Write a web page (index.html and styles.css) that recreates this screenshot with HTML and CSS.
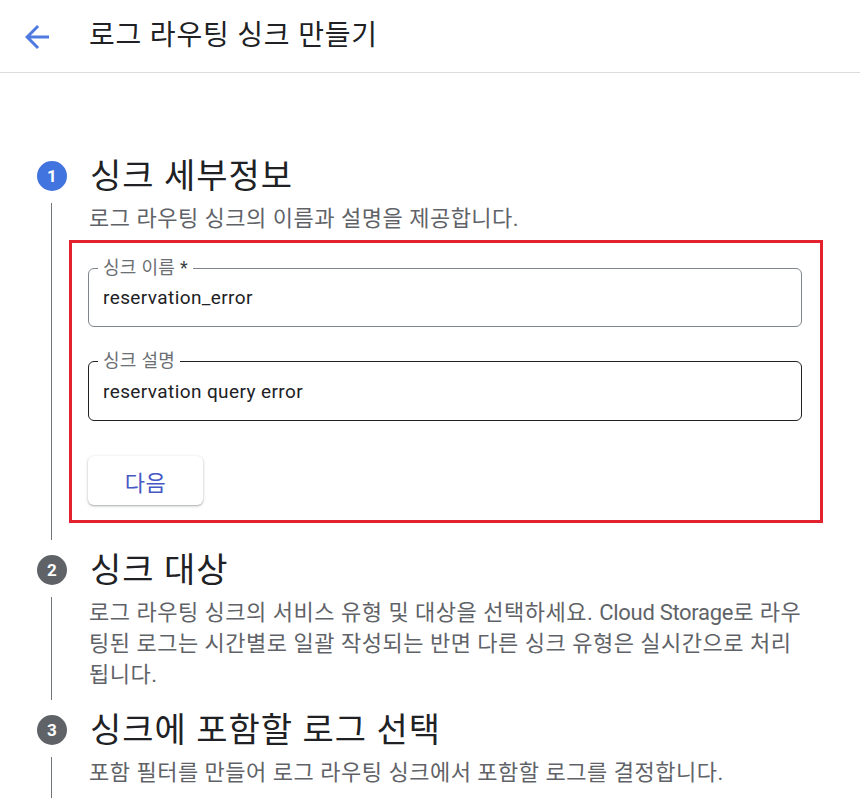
FILE: index.html
```html
<!DOCTYPE html>
<html lang="ko">
<head>
<meta charset="utf-8">
<title>로그 라우팅 싱크 만들기</title>
<link rel="stylesheet" href="styles.css">
</head>
<body>
<header class="topbar">
  <span class="back">
    <svg viewBox="0 0 24 24" width="36" height="36"><path fill="#4f7be0" d="M20 11H7.83l5.59-5.59L12 4l-8 8 8 8 1.41-1.41L7.83 13H20v-2z"/></svg>
  </span>
  <h1 class="title">로그 라우팅 싱크 만들기</h1>
</header>
<main class="steps">
  <section class="step">
    <div class="step-head">
      <span class="num num-active">1</span>
      <h2 class="step-title">싱크 세부정보</h2>
    </div>
    <div class="step-body step-body-open">
      <p class="desc">로그 라우팅 싱크의 이름과 설명을 제공합니다.</p>
      <div class="highlight">
        <div class="field">
          <span class="label">싱크 이름 <span class="req">*</span></span>
          <span class="value">reservation_error</span>
        </div>
        <div class="field field-focus">
          <span class="label">싱크 설명</span>
          <span class="value">reservation query error</span>
        </div>
        <button class="next">다음</button>
      </div>
    </div>
  </section>
  <section class="step">
    <div class="step-head">
      <span class="num">2</span>
      <h2 class="step-title">싱크 대상</h2>
    </div>
    <div class="step-body">
      <p class="desc">로그 라우팅 싱크의 서비스 유형 및 대상을 선택하세요. <span class="product">Cloud Storage</span>로 라우팅된 로그는 시간별로 일괄 작성되는 반면 다른 싱크 유형은 실시간으로 처리됩니다.</p>
    </div>
  </section>
  <section class="step">
    <div class="step-head">
      <span class="num">3</span>
      <h2 class="step-title">싱크에 포함할 로그 선택</h2>
    </div>
    <div class="step-body">
      <p class="desc">포함 필터를 만들어 로그 라우팅 싱크에서 포함할 로그를 결정합니다.</p>
    </div>
  </section>
</main>
</body>
</html>
```
FILE: styles.css
```css
* { box-sizing: border-box; }
html, body { margin: 0; padding: 0; background: #fff; }
body {
  font-family: "Roboto", "Noto Sans CJK KR", sans-serif;
  color: #202124;
  overflow: hidden;
}
.topbar {
  height: 73px;
  border-bottom: 1px solid #dadce0;
  display: flex;
  align-items: center;
  padding-left: 19px;
}
.back { display: flex; width: 36px; height: 36px; margin-top: 2px; }
.title {
  margin: 0 0 0 34px;
  font-size: 28px;
  letter-spacing: 0.8px;
  font-weight: 400;
  color: #202124;
  line-height: 36px;
}
.steps { padding-top: 73px; }
.step-head {
  height: 60px;
  display: flex;
  align-items: center;
  padding-left: 37px;
}
.num {
  width: 30px;
  height: 30px;
  border-radius: 50%;
  background: #5f6368;
  color: #fff;
  font-size: 17px;
  font-weight: 700;
  display: flex;
  align-items: center;
  justify-content: center;
  flex: none;
}
.num-active { background: #4274e0; }
.step-title {
  margin: 0 0 0 23px;
  font-size: 34px;
  letter-spacing: 1px;
  font-weight: 400;
  line-height: 42px;
  color: #202124;
}
.step-body {
  margin-left: 51px;
  border-left: 1px solid #70757a;
  padding: 0 0 10px 37px;
}
.step-body-open { padding: 0 0 17px 17px; }
.step-body-open .desc { padding-left: 20px; }
.desc {
  margin: -3px 0 0;
  font-size: 22px;
  letter-spacing: 0.5px;
  line-height: 31px;
  color: #5f6368;
  max-width: 716px;
}
.product { letter-spacing: -0.3px; }
.highlight {
  margin-top: 6px;
  border: 3px solid #e2222f;
  padding: 25px 18px 15px 16px;
  width: 754px;
}
.field {
  position: relative;
  height: 59px;
  border: 1px solid #80868b;
  border-radius: 6px;
  display: flex;
  align-items: center;
  padding-left: 14px;
}
.field + .field { margin-top: 34px; }
.field-focus { border-color: #202124; height: 60px; }
.label {
  position: absolute;
  left: 9px;
  top: -12px;
  padding: 0 5px;
  background: #fff;
  font-size: 18px;
  letter-spacing: 0.3px;
  line-height: 22px;
  color: #6b6f74;
}
.req { color: #3c4043; }
.value {
  font-size: 19px;
  letter-spacing: 0.4px;
  color: #202124;
}
.next {
  margin-top: 35px;
  width: 115px;
  height: 49px;
  border: none;
  border-radius: 6px;
  background: #fff;
  box-shadow: 0 1px 3px rgba(60, 64, 67, 0.35), 0 1px 1px rgba(60, 64, 67, 0.15);
  font-family: "Roboto", "Noto Sans CJK KR", sans-serif;
  font-size: 22px;
  letter-spacing: 0.5px;
  color: #4659c4;
  display: block;
}
```
